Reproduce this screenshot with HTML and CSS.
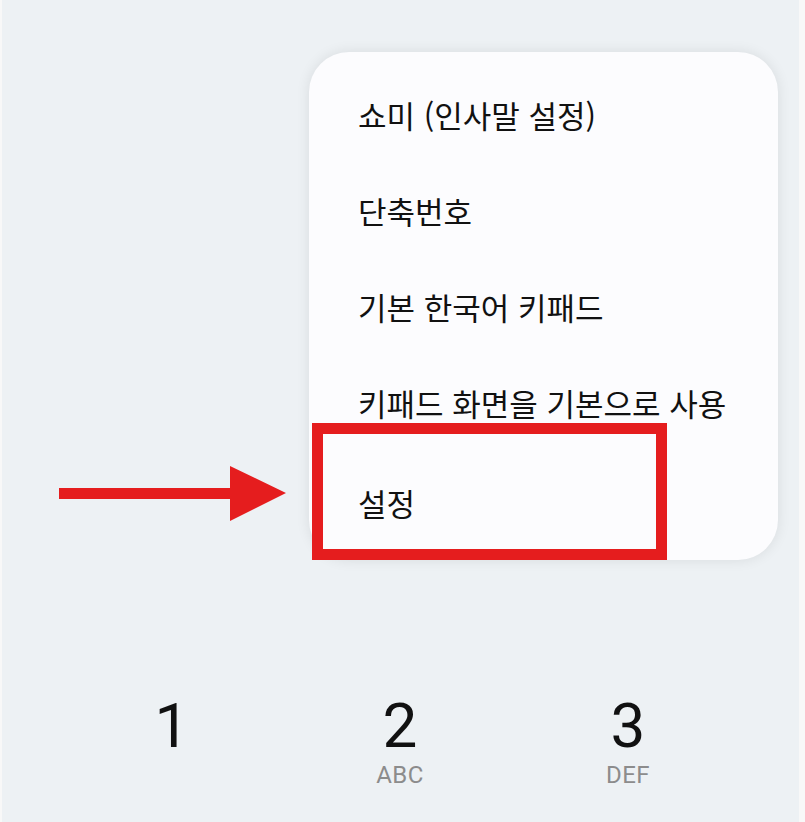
FILE: index.html
```html
<!DOCTYPE html>
<html lang="ko">
<head>
    <meta charset="UTF-8">
    <meta name="viewport" content="width=device-width, initial-scale=1.0">
    <title>키패드 메뉴</title>
    <link rel="stylesheet" href="styles.css">
</head>
<body>
    <div class="screen">
        <ul class="menu">
            <li class="menu-item">쇼미 (인사말 설정)</li>
            <li class="menu-item">단축번호</li>
            <li class="menu-item">기본 한국어 키패드</li>
            <li class="menu-item">키패드 화면을 기본으로 사용</li>
            <li class="menu-item">설정</li>
        </ul>

        <div class="highlight"></div>
        <svg class="arrow" width="230" height="56" viewBox="0 0 230 56">
            <polygon fill="#e51d1e" points="0,22 171,22 171,0 227,27 171,55 171,33 0,33"/>
        </svg>

        <div class="keypad">
            <div class="key">
                <span class="digit">1</span>
                <span class="letters"></span>
            </div>
            <div class="key">
                <span class="digit">2</span>
                <span class="letters">ABC</span>
            </div>
            <div class="key">
                <span class="digit">3</span>
                <span class="letters">DEF</span>
            </div>
        </div>
    </div>
</body>
</html>
```

FILE: styles.css
```css
* {
    margin: 0;
    padding: 0;
    box-sizing: border-box;
}

body {
    background-color: #f8f8f8;
    font-family: "Noto Sans CJK KR", "Noto Sans", sans-serif;
    overflow: hidden;
}

.screen {
    position: relative;
    width: 797px;
    height: 822px;
    margin-left: 2px;
    background-color: #edf1f4;
}

.menu {
    position: absolute;
    left: 307px;
    top: 52px;
    width: 469px;
    height: 508px;
    list-style: none;
    background-color: #fcfcfe;
    border-radius: 40px;
    box-shadow: 0 0 14px rgba(0, 0, 0, 0.09);
    padding-top: 15px;
}

.menu-item {
    height: 96px;
    line-height: 96px;
    padding-left: 49px;
    font-size: 31px;
    color: #111111;
    white-space: nowrap;
}

.menu-item:last-child {
    line-height: 104px;
}

.highlight {
    position: absolute;
    left: 310px;
    top: 423px;
    width: 355px;
    height: 137px;
    border: 11px solid #e51d1e;
}

.arrow {
    position: absolute;
    left: 57px;
    top: 466px;
}

.keypad {
    display: grid;
    grid-template-columns: repeat(3, 228px);
    padding: 695px 0 0 56px;
}

.key {
    display: flex;
    flex-direction: column;
    align-items: center;
    font-family: Roboto, "Liberation Sans", sans-serif;
}

.digit {
    font-size: 62px;
    line-height: 62px;
    color: #111111;
}

.letters {
    margin-top: 7px;
    font-size: 24px;
    line-height: 22px;
    letter-spacing: 0.5px;
    color: #8c8c8c;
}
```
